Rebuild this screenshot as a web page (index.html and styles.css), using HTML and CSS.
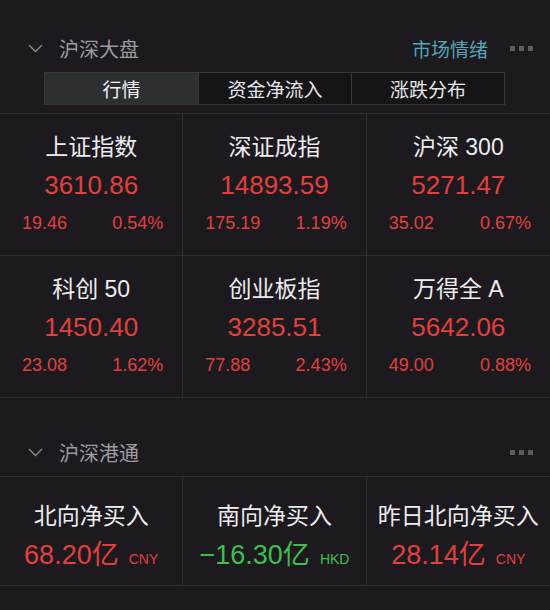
FILE: index.html
```html
<!DOCTYPE html>
<html lang="zh-CN">
<head>
<meta charset="utf-8">
<link rel="stylesheet" href="styles.css">
</head>
<body>
<div class="page">
  <section class="panel panel-main">
    <div class="head">
      <svg class="chev" width="15" height="9" viewBox="0 0 15 9"><polyline points="1,1 7.5,7.5 14,1" fill="none" stroke="#8a8a8e" stroke-width="1.4"/></svg>
      <span class="head-title">沪深大盘</span>
      <span class="head-link">市场情绪</span>
      <span class="dots"><i></i><i></i><i></i></span>
    </div>
    <div class="tabs">
      <div class="tab active">行情</div>
      <div class="tab">资金净流入</div>
      <div class="tab">涨跌分布</div>
    </div>
    <div class="grid grid-index">
      <div class="cell">
        <div class="name">上证指数</div>
        <div class="val up">3610.86</div>
        <div class="sub up"><span>19.46</span><span>0.54%</span></div>
      </div>
      <div class="cell">
        <div class="name">深证成指</div>
        <div class="val up">14893.59</div>
        <div class="sub up"><span>175.19</span><span>1.19%</span></div>
      </div>
      <div class="cell">
        <div class="name">沪深 300</div>
        <div class="val up">5271.47</div>
        <div class="sub up"><span>35.02</span><span>0.67%</span></div>
      </div>
      <div class="cell">
        <div class="name">科创 50</div>
        <div class="val up">1450.40</div>
        <div class="sub up"><span>23.08</span><span>1.62%</span></div>
      </div>
      <div class="cell">
        <div class="name">创业板指</div>
        <div class="val up">3285.51</div>
        <div class="sub up"><span>77.88</span><span>2.43%</span></div>
      </div>
      <div class="cell">
        <div class="name">万得全 A</div>
        <div class="val up">5642.06</div>
        <div class="sub up"><span>49.00</span><span>0.88%</span></div>
      </div>
    </div>
  </section>

  <section class="panel panel-hk">
    <div class="head">
      <svg class="chev" width="15" height="9" viewBox="0 0 15 9"><polyline points="1,1 7.5,7.5 14,1" fill="none" stroke="#8a8a8e" stroke-width="1.4"/></svg>
      <span class="head-title">沪深港通</span>
      <span class="dots"><i></i><i></i><i></i></span>
    </div>
    <div class="grid grid-flow">
      <div class="cell cell-flow">
        <div class="name">北向净买入</div>
        <div class="flow up">68.20亿<span class="cur">CNY</span></div>
      </div>
      <div class="cell cell-flow">
        <div class="name">南向净买入</div>
        <div class="flow down">−16.30亿<span class="cur">HKD</span></div>
      </div>
      <div class="cell cell-flow">
        <div class="name">昨日北向净买入</div>
        <div class="flow up">28.14亿<span class="cur">CNY</span></div>
      </div>
    </div>
  </section>
</div>
</body>
</html>
```

FILE: styles.css
```css
* { box-sizing: border-box; margin: 0; padding: 0; }

html, body {
  background: #1c1a1f;
}

body {
  width: 550px;
  height: 610px;
  overflow: hidden;
  font-family: "Liberation Sans", "Noto Sans CJK SC", sans-serif;
  color: #e8e8ea;
}

.page {
  padding-top: 30px;
}

.head {
  height: 36px;
  display: flex;
  align-items: center;
  padding: 0 17px 0 28px;
}

.chev {
  display: block;
  margin-right: 16px;
}

.head-title {
  font-family: "Noto Sans CJK SC", sans-serif;
  font-size: 20px;
  color: #9c9ca0;
  flex: 1;
}

.head-link {
  font-family: "Noto Sans CJK SC", sans-serif;
  font-size: 19px;
  color: #52a7b8;
  margin-right: 22px;
}

.dots {
  display: flex;
  gap: 4px;
}

.dots i {
  display: block;
  width: 5px;
  height: 5px;
  background: #5c5c60;
}

.tabs {
  margin: 6px 45px 0 44px;
  height: 33px;
  display: grid;
  grid-template-columns: 1fr 1fr 1fr;
  border: 1px solid #38383b;
  background: #151517;
}

.tab {
  font-family: "Noto Sans CJK SC", sans-serif;
  font-size: 19px;
  color: #e6e6e8;
  display: flex;
  align-items: center;
  justify-content: center;
  border-left: 1px solid #38383b;
}

.tab:first-child { border-left: none; }

.tab.active {
  background: #2e2f32;
  color: #f4f4f6;
}

.grid {
  display: grid;
  grid-template-columns: 1fr 1fr 1fr;
  border-top: 1px solid #2e2d32;
}

.grid-index {
  margin-top: 8px;
}

.cell {
  border-right: 1px solid #2e2d32;
  border-bottom: 1px solid #2e2d32;
  text-align: center;
}

.cell:nth-child(3n) { border-right: none; }

.grid-index .cell {
  height: 142px;
  padding-top: 14px;
}

.name {
  font-family: "Liberation Sans", "Noto Sans CJK SC", sans-serif;
  font-size: 23px;
  line-height: 38px;
  color: #ececee;
  white-space: nowrap;
}

.val {
  font-size: 26px;
  line-height: 38px;
}

.sub {
  display: flex;
  justify-content: space-between;
  padding: 0 19px 0 22px;
  font-size: 18px;
  line-height: 38px;
}

.up { color: #e0403d; }
.down { color: #3fbe4e; }

.panel-hk {
  margin-top: 36px;
}

.grid-flow {
  margin-top: 6px;
}

.cell-flow {
  height: 109px;
  padding-top: 20px;
}

.flow {
  font-family: "Liberation Sans", "Noto Sans CJK SC", sans-serif;
  font-size: 27px;
  line-height: 40px;
  white-space: nowrap;
}

.cur {
  font-size: 14px;
  margin-left: 10px;
}
```
